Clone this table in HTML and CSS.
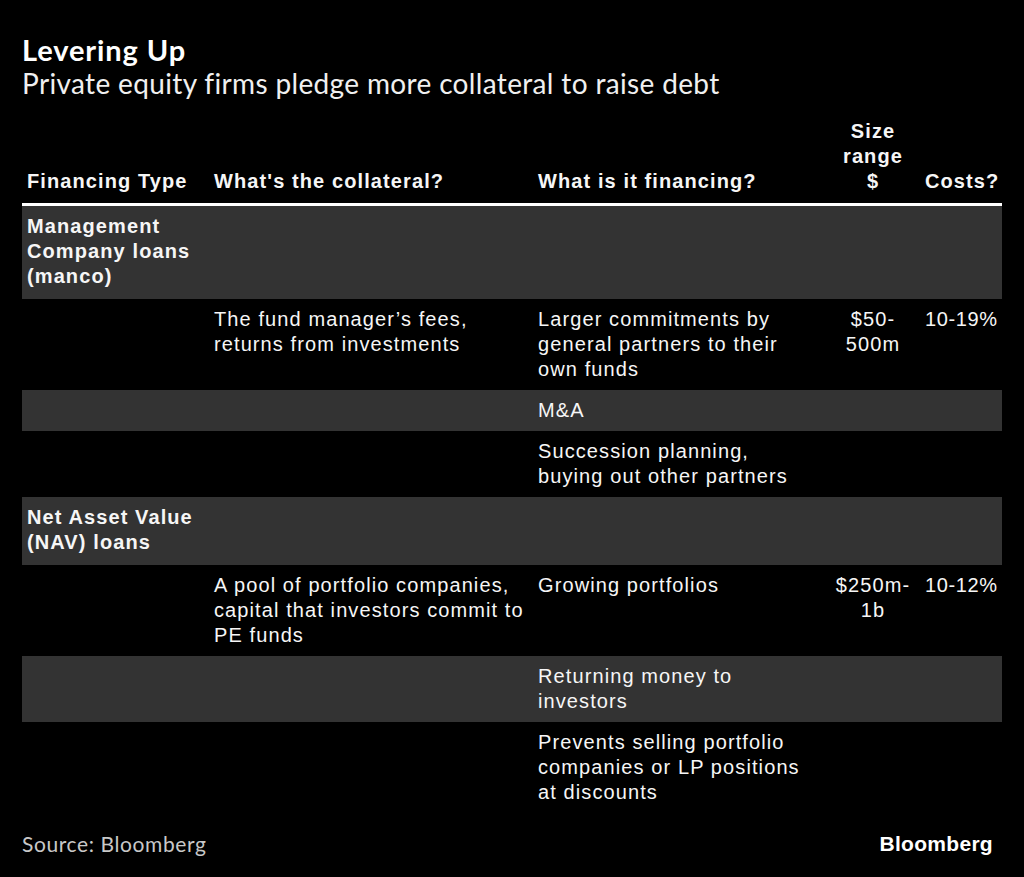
FILE: index.html
```html
<!DOCTYPE html>
<html lang="en">
<head>
<meta charset="utf-8">
<title>Levering Up</title>
<link rel="stylesheet" href="styles.css">
</head>
<body>
<div class="page">
  <header class="heading">
    <h1 class="title">Levering Up</h1>
    <p class="subtitle">Private equity firms pledge more collateral to raise debt</p>
  </header>
  <table class="grid">
    <colgroup>
      <col class="c1"><col class="c2"><col class="c3"><col class="c4"><col class="c5">
    </colgroup>
    <thead>
      <tr>
        <th>Financing Type</th>
        <th>What's the collateral?</th>
        <th>What is it financing?</th>
        <th class="center">Size<br>range<br>$</th>
        <th>Costs?</th>
      </tr>
    </thead>
    <tbody>
      <tr class="alt">
        <td class="type">Management Company loans (manco)</td><td></td><td></td><td></td><td></td>
      </tr>
      <tr>
        <td></td><td>The fund manager’s fees, returns from investments</td><td>Larger commitments by general partners to their own funds</td><td class="center">$50-<br>500m</td><td class="cost">10-19%</td>
      </tr>
      <tr class="alt">
        <td></td><td></td><td>M&amp;A</td><td></td><td></td>
      </tr>
      <tr>
        <td></td><td></td><td>Succession planning, buying out other partners</td><td></td><td></td>
      </tr>
      <tr class="alt">
        <td class="type">Net Asset Value (NAV) loans</td><td></td><td></td><td></td><td></td>
      </tr>
      <tr>
        <td></td><td>A pool of portfolio companies, capital that investors commit to PE funds</td><td>Growing portfolios</td><td class="center">$250m-<br>1b</td><td class="cost">10-12%</td>
      </tr>
      <tr class="alt">
        <td></td><td></td><td>Returning money to investors</td><td></td><td></td>
      </tr>
      <tr>
        <td></td><td></td><td>Prevents selling portfolio companies or LP positions at discounts</td><td></td><td></td>
      </tr>
    </tbody>
  </table>
  <footer class="foot">
    <span class="source">Source: Bloomberg</span>
    <span class="brand">Bloomberg</span>
  </footer>
</div>
</body>
</html>
```
FILE: styles.css
```css
html, body {
  margin: 0;
  padding: 0;
  background: #000;
}
.page {
  width: 1024px;
  height: 877px;
  box-sizing: border-box;
  padding: 34px 22px 0 22px;
  color: #fff;
}
.heading {
  margin: 0;
}
.title {
  margin: 0;
  font-family: "Lato", "Open Sans", sans-serif;
  font-weight: 700;
  font-size: 29px;
  line-height: 32px;
  letter-spacing: 0.9px;
}
.subtitle {
  margin: 0;
  font-family: "Lato", "Open Sans", sans-serif;
  font-weight: 400;
  font-size: 28px;
  line-height: 34px;
  letter-spacing: 0.35px;
  color: #f0f0f0;
}
.grid {
  margin-top: 19px;
  width: 980px;
  border-collapse: collapse;
  table-layout: fixed;
  font-family: "Liberation Sans", Arial, sans-serif;
  font-size: 20px;
  line-height: 25px;
  letter-spacing: 1.1px;
  color: #f6f6f6;
}
.c1 { width: 187px; }
.c2 { width: 324px; }
.c3 { width: 293px; }
.c4 { width: 94px; }
.c5 { width: 82px; }
.grid th {
  text-align: left;
  vertical-align: bottom;
  font-weight: 700;
  padding: 0 5px 9px 5px;
  border-bottom: 3px solid #fff;
}
.grid td {
  vertical-align: top;
  padding: 8px 5px 8px 5px;
}
.grid .center {
  text-align: center;
  white-space: nowrap;
}
.grid td.cost {
  white-space: nowrap;
  letter-spacing: 0.6px;
}
.grid td.type {
  font-weight: 700;
  padding-bottom: 10px;
}
.grid tr.alt td {
  background: #333333;
}
.foot {
  display: flex;
  justify-content: space-between;
  align-items: center;
  padding-top: 18px;
}
.source {
  font-family: "Lato", "Open Sans", sans-serif;
  font-size: 21px;
  letter-spacing: 0.6px;
  color: #c8c8c8;
}
.brand {
  font-family: "Liberation Sans", Arial, sans-serif;
  font-weight: 700;
  font-size: 21px;
  margin-right: 9px;
  letter-spacing: 0.3px;
}
```
